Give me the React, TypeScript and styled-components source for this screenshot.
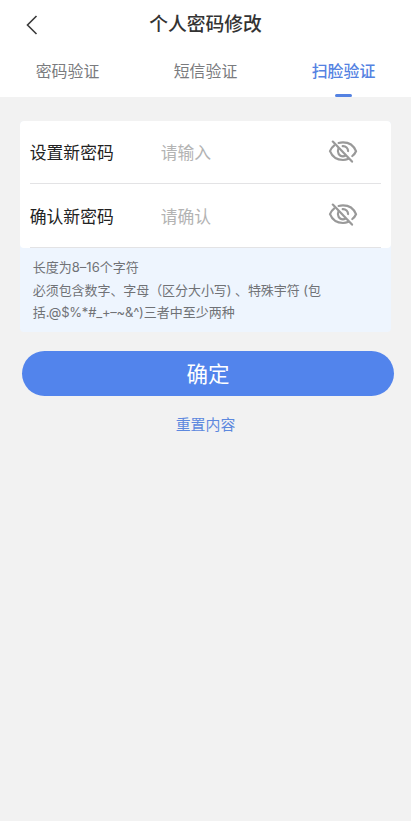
import React from "react";
import styled, { createGlobalStyle } from "styled-components";

const GlobalStyle = createGlobalStyle`
  *, *::before, *::after { box-sizing: border-box; }
  html, body { margin: 0; padding: 0; background: #f2f2f2; }
  body { font-family: "Noto Sans CJK SC", sans-serif; }
  button, input { font-family: inherit; border: 0; background: none; padding: 0; margin: 0; outline: 0; }
`;

const Screen = styled.div`
  width: 411px;
  height: 821px;
  background: #f2f2f2;
  overflow: hidden;
`;

const Top = styled.header`
  height: 97px;
  background: #fff;
  display: flex;
  flex-direction: column;
`;

const TitleBar = styled.div`
  height: 48px;
  display: grid;
  grid-template-columns: 64px 1fr 64px;
  align-items: center;
`;

const BackButton = styled.button`
  height: 48px;
  display: flex;
  align-items: center;
  padding-left: 25px;
  padding-top: 2px;
`;

const Title = styled.h1`
  margin: -2px 0 0;
  text-align: center;
  font-size: 18.8px;
  line-height: 28px;
  font-weight: 500;
  color: #333;
`;

const Tabs = styled.nav`
  flex: 1;
  display: grid;
  grid-template-columns: repeat(3, 138px);
  margin-left: -1.5px;
`;

const Tab = styled.button<{ $active?: boolean }>`
  display: flex;
  flex-direction: column;
  align-items: center;
  justify-content: space-between;
  padding-top: 11px;
  font-size: 15.9px;
  line-height: 24px;
  font-weight: ${(p) => (p.$active ? 500 : 400)};
  color: ${(p) => (p.$active ? "#5482e2" : "#7a7b7e")};

  &::after {
    content: "";
    width: 17px;
    height: 3px;
    border-radius: 1.5px;
    background: ${(p) => (p.$active ? "#5482e2" : "transparent")};
  }
`;

const Panel = styled.section`
  width: 370.5px;
  margin: 24px 0 0 20.3px;
  border-radius: 4px;
  background: #eef5fe;
  overflow: hidden;
`;

const Card = styled.div`
  background: #fff;
  border-radius: 4px;
  padding: 0 9.5px;
`;

const Row = styled.label`
  height: 63.5px;
  display: flex;
  align-items: center;
  border-bottom: 1px solid #e3e3e5;

  &:first-child { height: 63px; }
  &:last-child { height: 64px; }
`;

const RowLabel = styled.span`
  width: 131px;
  font-size: 16.8px;
  line-height: 26px;
  color: #222;
  white-space: nowrap;
`;

const RowInput = styled.input`
  width: 160px;
  height: 26px;
  font-size: 16.8px;
  color: #222;
  &::placeholder { color: #b3b3b3; opacity: 1; }
`;

const EyeButton = styled.button`
  display: flex;
  margin: -2px 0 0 7px;
`;

const Hint = styled.div`
  height: 84px;
  padding: 8px 0 0 12.5px;
  font-family: Inter, "Noto Sans CJK SC", sans-serif;
  font-size: 13px;
  line-height: 22.5px;
  color: #707276;
`;

const HintLine = styled.div<{ $spacing?: number }>`
  white-space: pre;
  letter-spacing: ${(p) => p.$spacing ?? 0}px;
`;

const Symbols = styled.span`
  letter-spacing: -0.2px;
`;

const Submit = styled.button`
  display: block;
  width: 372px;
  height: 45px;
  margin: 19px 0 0 22px;
  border-radius: 23px;
  background: #5284ec;
  color: #fff;
  font-size: 21.5px;
  line-height: 43px;
  padding-bottom: 2px;
`;

const Reset = styled.button`
  display: block;
  margin: 17px auto 0;
  font-size: 14.9px;
  line-height: 22px;
  color: #5c88de;
`;

const HiddenEye = () => (
  <svg width="30" height="23" viewBox="0 0 30 23" fill="none" stroke="#999" strokeWidth="2.2" strokeLinecap="round">
    <path d="M10.600 3C12 2.600 13.400 2.400 15 2.400c6 0 10.800 3.400 13 8.800-.8 1.900-2 3.500-3.700 4.800" />
    <path d="M6.300 5.300C4.400 6.700 2.900 8.700 2 11.200 4.200 16.600 9 20 15 20c1.800 0 3.500-.3 5-.9" />
    <path d="M14.700 6.200c3.200-.2 5.400 2 5.400 4.900" />
    <path d="M10.500 8.400c-1.900 4 .7 7.900 4.500 7.900.9 0 1.600-.2 2.300-.5" />
    <path d="M4.800 1.600 24 21.600" />
  </svg>
);

const tabs = ["密码验证", "短信验证", "扫脸验证"];
const fields = [
  { label: "设置新密码", placeholder: "请输入" },
  { label: "确认新密码", placeholder: "请确认" },
];

export default function App() {
  return (
    <Screen>
      <GlobalStyle />
      <Top>
        <TitleBar>
          <BackButton aria-label="返回">
            <svg width="14" height="22" viewBox="0 0 14 22" fill="none" stroke="#3a3a3a" strokeWidth="1.6">
              <path d="M11.500 2 2.500 11l9 9" />
            </svg>
          </BackButton>
          <Title>个人密码修改</Title>
        </TitleBar>
        <Tabs>
          {tabs.map((tab, i) => (
            <Tab key={tab} $active={i === 2}>{tab}</Tab>
          ))}
        </Tabs>
      </Top>
      <Panel>
        <Card>
          {fields.map((f) => (
            <Row key={f.label}>
              <RowLabel>{f.label}</RowLabel>
              <RowInput type="password" placeholder={f.placeholder} />
              <EyeButton aria-label="显示密码"><HiddenEye /></EyeButton>
            </Row>
          ))}
        </Card>
        <Hint>
          <HintLine>长度为8–16个字符</HintLine>
          <HintLine $spacing={-0.07}>必须包含数字、字母（区分大小写) 、特殊宇符 (包</HintLine>
          <HintLine>括<Symbols>.@$%*#_+–~&amp;^)</Symbols>三者中至少两种</HintLine>
        </Hint>
      </Panel>
      <Submit>确定</Submit>
      <Reset>重置内容</Reset>
    </Screen>
  );
}
